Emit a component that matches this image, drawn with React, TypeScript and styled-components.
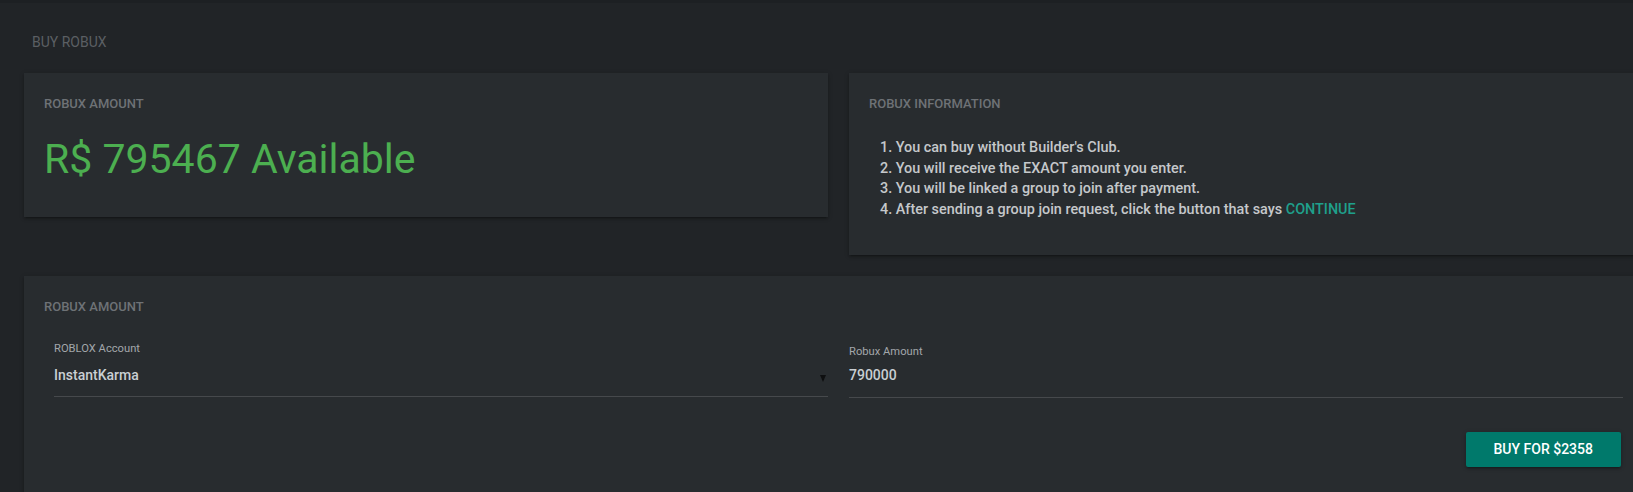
import React from 'react';
import styled, { createGlobalStyle } from 'styled-components';

const GlobalStyle = createGlobalStyle`
  html, body {
    margin: 0;
    padding: 0;
    background-color: #212427;
    overflow: hidden;
  }
  body {
    font-family: Roboto, 'Liberation Sans', sans-serif;
    -webkit-font-smoothing: antialiased;
  }
  * {
    box-sizing: border-box;
  }
`;

const TopEdge = styled.div`
  height: 3px;
  background-color: #1d2023;
`;

const Page = styled.main`
  width: 1677px;
  padding: 0 24px 40px 24px;
`;

const PageTitle = styled.h1`
  margin: 31px 0 23px 0;
  padding-left: 8px;
  font-size: 14px;
  line-height: 16px;
  font-weight: 400;
  color: #5b5f63;
  text-transform: uppercase;
`;

const Grid = styled.div`
  display: grid;
  grid-template-columns: 804px 804px;
  column-gap: 21px;
  row-gap: 21px;
  align-items: start;
`;

const Card = styled.section<{ $wide?: boolean }>`
  background-color: #282c2f;
  grid-column: ${(p) => (p.$wide ? '1 / span 2' : 'auto')};
  padding: 23px 20px 34px 20px;
  box-shadow: 0 2px 2px 0 rgba(0, 0, 0, 0.14), 0 3px 1px -2px rgba(0, 0, 0, 0.12),
    0 1px 5px 0 rgba(0, 0, 0, 0.2);
`;

const CardLabel = styled.h2`
  margin: 0;
  font-size: 13px;
  line-height: 16px;
  font-weight: 500;
  color: #6e7276;
  text-transform: uppercase;
`;

const Available = styled.div`
  margin-top: 23px;
  font-size: 41px;
  line-height: 48px;
  font-weight: 400;
  color: #4caf50;
  white-space: nowrap;
`;

const InfoList = styled.ol`
  margin: 26px 0 0 0;
  padding: 0 0 0 11px;
  list-style-position: inside;
  font-size: 14.4px;
  line-height: 20.7px;
  font-weight: 500;
  color: #c5c8cb;
`;

const Accent = styled.span`
  color: #1fa08c;
`;

const Fields = styled.div`
  display: grid;
  grid-template-columns: 1fr 1fr;
  column-gap: 21px;
  margin: 27px 10px 0 10px;
  align-items: start;
`;

const Field = styled.div<{ $offset?: number }>`
  padding-top: ${(p) => p.$offset ?? 0}px;
`;

const FieldLabel = styled.label`
  display: block;
  font-size: 11.2px;
  line-height: 13px;
  font-weight: 400;
  color: #a3a7ab;
`;

const FieldValue = styled.div<{ $gap: number; $bottom: number }>`
  display: flex;
  align-items: center;
  justify-content: space-between;
  margin-top: ${(p) => p.$gap}px;
  padding-bottom: ${(p) => p.$bottom}px;
  border-bottom: 1px solid #46494c;
  font-size: 14px;
  line-height: 16px;
  font-weight: 500;
  color: #c9cfd3;
`;

const Caret = styled.span`
  width: 0;
  height: 0;
  margin: 8px 2px 0 0;
  border-left: 3.5px solid transparent;
  border-right: 3.5px solid transparent;
  border-top: 7px solid #0e0f10;
`;

const Actions = styled.div`
  display: flex;
  justify-content: flex-end;
  margin: 34px 12px 0 0;
`;

const BuyButton = styled.button`
  height: 35px;
  padding: 0 28px;
  border: none;
  border-radius: 2px;
  background-color: #00796b;
  color: #ffffff;
  font-family: Roboto, 'Liberation Sans', sans-serif;
  font-size: 14px;
  font-weight: 500;
  text-transform: uppercase;
  cursor: pointer;
  box-shadow: 0 2px 2px 0 rgba(0, 0, 0, 0.14), 0 3px 1px -2px rgba(0, 0, 0, 0.12),
    0 1px 5px 0 rgba(0, 0, 0, 0.2);
`;

const steps = [
  "You can buy without Builder's Club.",
  'You will receive the EXACT amount you enter.',
  'You will be linked a group to join after payment.',
];

export default function App() {
  return (
    <>
      <GlobalStyle />
      <TopEdge />
      <Page>
        <PageTitle>Buy Robux</PageTitle>
        <Grid>
          <Card>
            <CardLabel>Robux Amount</CardLabel>
            <Available>R$ 795467 Available</Available>
          </Card>
          <Card>
            <CardLabel>Robux Information</CardLabel>
            <InfoList>
              {steps.map((s) => (
                <li key={s}>{s}</li>
              ))}
              <li>
                After sending a group join request, click the button that says <Accent>CONTINUE</Accent>
              </li>
            </InfoList>
          </Card>
          <Card $wide>
            <CardLabel>Robux Amount</CardLabel>
            <Fields>
              <Field>
                <FieldLabel>ROBLOX Account</FieldLabel>
                <FieldValue $gap={12} $bottom={13}>
                  <span>InstantKarma</span>
                  <Caret />
                </FieldValue>
              </Field>
              <Field $offset={3}>
                <FieldLabel>Robux Amount</FieldLabel>
                <FieldValue $gap={9} $bottom={14}>
                  <span>790000</span>
                </FieldValue>
              </Field>
            </Fields>
            <Actions>
              <BuyButton>Buy for $2358</BuyButton>
            </Actions>
          </Card>
        </Grid>
      </Page>
    </>
  );
}
